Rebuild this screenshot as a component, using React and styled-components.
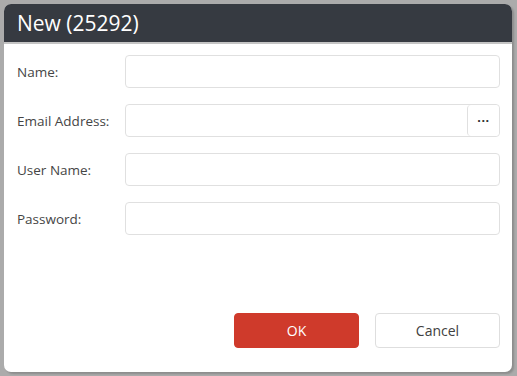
import React from 'react';
import styled, { createGlobalStyle } from 'styled-components';

const GlobalStyle = createGlobalStyle`
  html, body {
    margin: 0;
    padding: 0;
    background: #ababab;
    font-family: "Open Sans", "Noto Sans", "Liberation Sans", sans-serif;
  }
  #root {
    width: 517px;
    height: 376px;
    padding: 4px 5px 4px 4px;
    box-sizing: border-box;
  }
`;

const Dialog = styled.div`
  width: 508px;
  height: 368px;
  background: #fff;
  border-radius: 7px;
  box-shadow: 2px 2px 2px rgba(0, 0, 0, 0.18);
  display: flex;
  flex-direction: column;
  overflow: hidden;
`;

const Header = styled.div`
  height: 37px;
  background: #363a41;
  border-bottom: 2px solid #c4c4c4;
  color: #fff;
  font-size: 21px;
  display: flex;
  align-items: center;
  padding: 0 13px 1px 13px;
  flex-shrink: 0;
`;

const Form = styled.div`
  flex: 1;
  padding: 11px 12px 0 13px;
  display: flex;
  flex-direction: column;
  gap: 16px;
`;

const Row = styled.div`
  display: grid;
  grid-template-columns: 108px 1fr;
  align-items: center;
  height: 33px;
`;

const Label = styled.label`
  font-size: 13.5px;
  color: #454545;
`;

const Field = styled.div`
  height: 33px;
  box-sizing: border-box;
  border: 1px solid #e0e0e0;
  border-radius: 4px;
  display: flex;
  overflow: hidden;
`;

const Input = styled.input`
  flex: 1;
  border: none;
  outline: none;
  background: transparent;
  font: inherit;
  font-size: 13.5px;
  padding: 0 8px;
`;

const EllipsisButton = styled.button`
  width: 32px;
  border: none;
  border-left: 1px solid #e0e0e0;
  border-radius: 4px;
  background: #fff;
  color: #333;
  font-size: 13px;
  font-weight: bold;
  padding: 0 0 6px 0;
  letter-spacing: 0.5px;
  display: flex;
  align-items: center;
  justify-content: center;
`;

const Footer = styled.div`
  display: flex;
  justify-content: flex-end;
  gap: 16px;
  padding: 0 12px 24px 13px;
`;

const Button = styled.button`
  width: 125px;
  height: 35px;
  box-sizing: border-box;
  border-radius: 4px;
  font: inherit;
  font-size: 14px;
  background: ${(p) => (p.primary ? '#cf3a2b' : '#fff')};
  color: ${(p) => (p.primary ? '#fff' : '#404040')};
  border: 1px solid ${(p) => (p.primary ? '#cf3a2b' : '#dedede')};
`;

const fields = [
  { label: 'Name:' },
  { label: 'Email Address:', picker: true },
  { label: 'User Name:' },
  { label: 'Password:', type: 'password' },
];

export default function App() {
  return (
    <>
      <GlobalStyle />
      <Dialog>
        <Header>New (25292)</Header>
        <Form>
          {fields.map((f) => (
            <Row key={f.label}>
              <Label>{f.label}</Label>
              <Field>
                <Input type={f.type || 'text'} />
                {f.picker && <EllipsisButton>...</EllipsisButton>}
              </Field>
            </Row>
          ))}
        </Form>
        <Footer>
          <Button primary>OK</Button>
          <Button>Cancel</Button>
        </Footer>
      </Dialog>
    </>
  );
}
